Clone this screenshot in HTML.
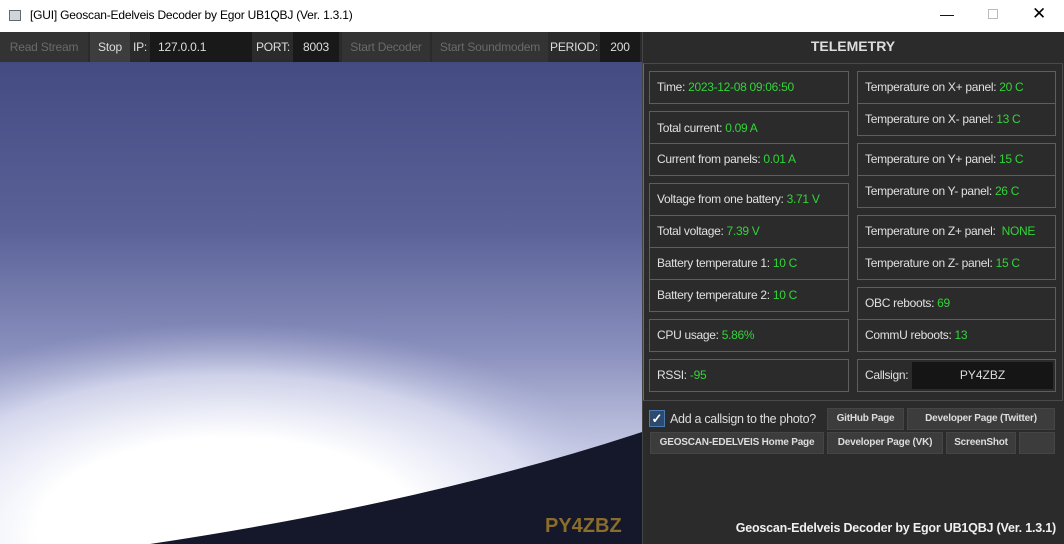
<!DOCTYPE html>
<html style="overflow:hidden;width:1064px;height:544px"><head><meta charset="utf-8"><style>
*{margin:0;padding:0;box-sizing:border-box}
body{width:1064px;height:544px;overflow:hidden;background:#2b2b2b;font-family:"Liberation Sans",sans-serif;font-size:12px;color:#ddd;position:relative}
.abs{position:absolute}
svg{display:block}
.title{left:0;top:0;width:1064px;height:32px;background:#fff;color:#000;font-size:12px}
.bar{top:32px;height:30px;background:#2b2b2b}
.tb{position:absolute;top:32px;height:30px;line-height:30px;font-size:12px;text-align:center;letter-spacing:-0.2px}
.box{position:absolute;border:1px solid #5e5e5e;background:#2b2b2b;line-height:30px;padding-left:7px;font-size:12px;letter-spacing:-0.3px;color:#e0e0e0;white-space:nowrap}
.g{color:#32d43a}
.btn{position:absolute;background:#3c3c3c;border:1px solid #454545;color:#ddd;font-weight:bold;font-size:10px;letter-spacing:-0.2px;text-align:center;line-height:20px}
</style></head><body>
<div class="abs title">
 <div class="abs" style="left:9px;top:10px;width:12px;height:11px;border:1px solid #667;background:#cfd6da"></div>
 <div class="abs" style="left:30px;top:8px;letter-spacing:-0.2px">[GUI] Geoscan-Edelveis Decoder by Egor UB1QBJ (Ver. 1.3.1)</div>
 <div class="abs" style="left:940px;top:6px;font-size:14px">&#8212;</div>
 <div class="abs" style="left:988px;top:9px;width:10px;height:10px;border:1px solid #bbb"></div>
 <div class="abs" style="left:1032px;top:4px;font-size:17px">&#10005;</div>
</div>
<div class="abs bar" style="left:0;width:642px"></div>
<div class="tb" style="left:0;width:88px;color:#6a6a6a;background:#333">Read Stream</div>
<div class="tb" style="left:90px;width:40px;background:#3d3d3d;color:#ddd">Stop</div>
<div class="tb" style="left:131px;width:18px;color:#ddd">IP:</div>
<div class="tb" style="left:150px;width:102px;background:#191919;color:#ddd;text-align:left;padding-left:8px">127.0.0.1</div>
<div class="tb" style="left:254px;width:38px;color:#ddd">PORT:</div>
<div class="tb" style="left:293px;width:46px;background:#191919;color:#ddd">8003</div>
<div class="tb" style="left:342px;width:88px;color:#6a6a6a;background:#333">Start Decoder</div>
<div class="tb" style="left:432px;width:116px;color:#6a6a6a;background:#333">Start Soundmodem</div>
<div class="tb" style="left:550px;width:48px;color:#ddd">PERIOD:</div>
<div class="tb" style="left:600px;width:40px;background:#191919;color:#ddd">200</div>

<div class="abs" style="left:0;top:62px;width:642px;height:482px;overflow:hidden">
<svg width="642" height="482">
<defs>
<linearGradient id="sky" x1="0" y1="0" x2="0" y2="1">
<stop offset="0" stop-color="#444b82"/><stop offset="0.35" stop-color="#5a6298"/><stop offset="0.6" stop-color="#8a90bd"/><stop offset="0.8" stop-color="#c3c7e3"/><stop offset="1" stop-color="#e6e8f6"/></linearGradient>
<radialGradient id="sun" cx="230" cy="470" r="1" gradientTransform="translate(230 470) scale(430 210) translate(-230 -470)" gradientUnits="userSpaceOnUse">
<stop offset="0" stop-color="#ffffff"/><stop offset="0.45" stop-color="#ffffff"/><stop offset="0.75" stop-color="#e4e6f6" stop-opacity="0.7"/><stop offset="1" stop-color="#b0b5da" stop-opacity="0"/></radialGradient>
</defs>
<rect width="642" height="482" fill="url(#sky)"/>
<ellipse cx="230" cy="470" rx="430" ry="210" fill="url(#sun)"/>
<path d="M642,370 Q430,440 150,482 L642,482 Z" fill="#15172a"/>
<text x="545" y="470" font-family="Liberation Sans" font-weight="bold" font-size="20" fill="#8a6d2a">PY4ZBZ</text>
</svg>
</div>

<div class="abs" style="left:642px;top:32px;width:422px;height:512px;background:#2b2b2b;border-left:1px solid #444"></div>
<div class="abs" style="left:642px;top:38px;width:422px;text-align:center;font-weight:bold;font-size:14px;color:#ddd">TELEMETRY</div>
<div class="abs" style="left:643px;top:63px;width:420px;height:338px;border:1px solid #4a4a4a;border-left:1px solid #5a6a9a"></div>

<div class="box" style="left:649px;top:71px;width:200px;height:33px">Time: <span class="g">2023-12-08 09:06:50</span></div>
<div class="box" style="left:649px;top:111px;width:200px;height:33px;line-height:32px">Total current: <span class="g">0.09 A</span></div>
<div class="box" style="left:649px;top:143px;width:200px;height:33px">Current from panels: <span class="g">0.01 A</span></div>
<div class="box" style="left:649px;top:183px;width:200px;height:33px">Voltage from one battery: <span class="g">3.71 V</span></div>
<div class="box" style="left:649px;top:215px;width:200px;height:33px">Total voltage: <span class="g">7.39 V</span></div>
<div class="box" style="left:649px;top:247px;width:200px;height:33px">Battery temperature 1: <span class="g">10 C</span></div>
<div class="box" style="left:649px;top:279px;width:200px;height:33px">Battery temperature 2: <span class="g">10 C</span></div>
<div class="box" style="left:649px;top:319px;width:200px;height:33px">CPU usage: <span class="g">5.86%</span></div>
<div class="box" style="left:649px;top:359px;width:200px;height:33px">RSSI: <span class="g">-95</span></div>

<div class="box" style="left:857px;top:71px;width:199px;height:33px">Temperature on X+ panel: <span class="g">20 C</span></div>
<div class="box" style="left:857px;top:103px;width:199px;height:33px">Temperature on X- panel: <span class="g">13 C</span></div>
<div class="box" style="left:857px;top:143px;width:199px;height:33px">Temperature on Y+ panel: <span class="g">15 C</span></div>
<div class="box" style="left:857px;top:175px;width:199px;height:33px">Temperature on Y- panel: <span class="g">26 C</span></div>
<div class="box" style="left:857px;top:215px;width:199px;height:33px">Temperature on Z+ panel: &nbsp;<span class="g">NONE</span></div>
<div class="box" style="left:857px;top:247px;width:199px;height:33px">Temperature on Z- panel: <span class="g">15 C</span></div>
<div class="box" style="left:857px;top:287px;width:199px;height:33px">OBC reboots: <span class="g">69</span></div>
<div class="box" style="left:857px;top:319px;width:199px;height:33px">CommU reboots: <span class="g">13</span></div>
<div class="box" style="left:857px;top:359px;width:199px;height:33px">Callsign:</div>
<div class="abs" style="left:912px;top:362px;width:141px;height:27px;background:#151515;color:#ddd;text-align:center;line-height:27px">PY4ZBZ</div>

<div class="abs" style="left:649px;top:410px;width:16px;height:17px;border:1px solid #4a7ab0;background:#2d4a6e;color:#fff;font-size:13px;line-height:15px;text-align:center;font-weight:bold">&#10003;</div>
<div class="abs" style="left:670px;top:412px;font-size:12.5px;letter-spacing:-0.3px;color:#ddd">Add a callsign to the photo?</div>
<div class="btn" style="left:827px;top:408px;width:77px;height:22px">GitHub Page</div>
<div class="btn" style="left:907px;top:408px;width:148px;height:22px">Developer Page (Twitter)</div>
<div class="btn" style="left:650px;top:432px;width:174px;height:22px">GEOSCAN-EDELVEIS Home Page</div>
<div class="btn" style="left:827px;top:432px;width:116px;height:22px">Developer Page (VK)</div>
<div class="btn" style="left:946px;top:432px;width:70px;height:22px">ScreenShot</div>
<div class="btn" style="left:1019px;top:432px;width:36px;height:22px"></div>

<div class="abs" style="left:640px;top:520px;width:416px;height:16px;line-height:16px;text-align:right;font-weight:bold;font-size:12.5px;letter-spacing:-0.2px;color:#f0f0f0">Geoscan-Edelveis Decoder by Egor UB1QBJ (Ver. 1.3.1)</div>
</body></html>
